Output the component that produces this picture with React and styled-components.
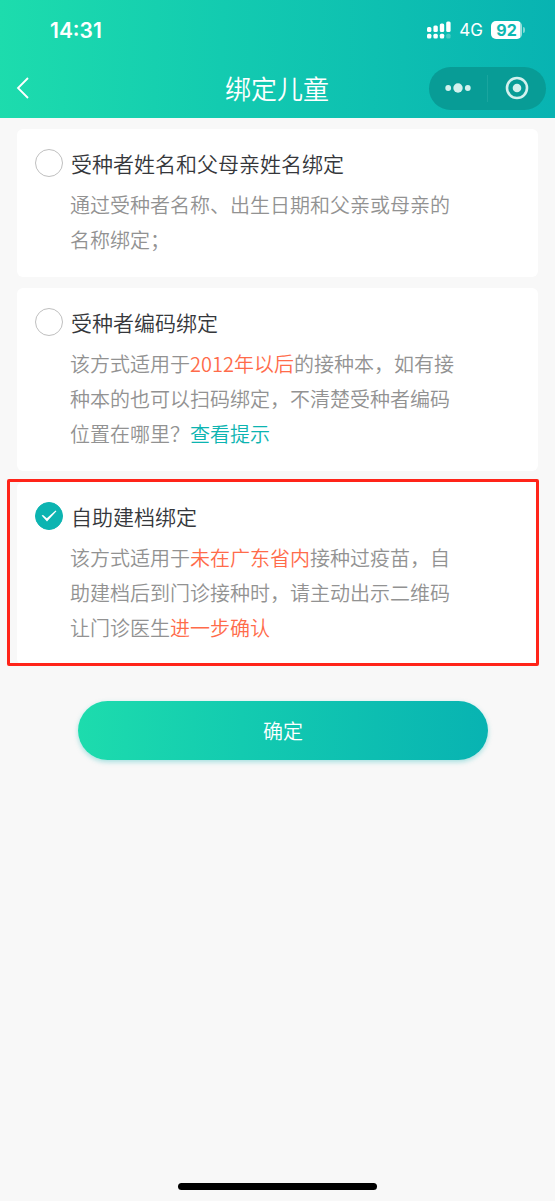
import { useState } from "react";
import styled, { createGlobalStyle, css } from "styled-components";

const GlobalStyle = createGlobalStyle`
  * {
    box-sizing: border-box;
  }

  body {
    margin: 0;
    background: #f8f8f8;
    font-family: "Noto Sans CJK SC", sans-serif;
    font-weight: 350;
  }
`;

const gradient = "linear-gradient(92deg, #1ddcad 0%, #13cbb0 40%, #08b3b2 100%)";

const Page = styled.div`
  min-height: 100vh;
  display: flex;
  flex-direction: column;
`;

const Header = styled.header`
  padding-bottom: 2px;
  background: ${gradient};
  color: #fff;
`;

const StatusBar = styled.div`
  display: flex;
  align-items: center;
  justify-content: space-between;
  height: 60px;
  padding: 0 30px 0 50px;
  font-family: Inter, sans-serif;
`;

const Time = styled.span`
  font-size: 21px;
  font-weight: 600;
`;

const StatusIcons = styled.div`
  display: flex;
  align-items: center;
  gap: 8px;
`;

const Network = styled.span`
  font-size: 17px;
  font-weight: 400;
`;

const Battery = styled.div`
  display: flex;
  align-items: center;
  gap: 1px;
`;

const BatteryLevel = styled.span`
  width: 31px;
  height: 18px;
  border-radius: 5px;
  background: linear-gradient(90deg, #fff 92%, #9be0dc 92%);
  color: #0cb8b1;
  font-size: 16px;
  font-weight: 700;
  line-height: 18px;
  text-align: center;
`;

const BatteryTip = styled.span`
  width: 2px;
  height: 6px;
  border-radius: 0 2px 2px 0;
  background: #7fd8d4;
`;

const NavBar = styled.div`
  display: grid;
  grid-template-columns: 1fr auto 1fr;
  align-items: center;
  height: 56px;
  padding: 0 9px 0 8px;
`;

const BackButton = styled.button`
  display: flex;
  justify-self: start;
  padding: 0;
  border: none;
  background: none;
  color: #fff;
`;

const NavTitle = styled.h1`
  margin: 0;
  font-size: 26px;
  font-weight: 350;
  line-height: 36px;
`;

const Capsule = styled.div`
  display: flex;
  align-items: center;
  justify-self: end;
  width: 117px;
  height: 43px;
  border-radius: 22px;
  background: #089c96;
`;

const CapsuleButton = styled.button`
  flex: 1;
  display: flex;
  align-items: center;
  justify-content: center;
  height: 27px;
  padding: 0;
  border: none;
  background: none;

  & + & {
    border-left: 1px solid #1aa59f;
  }
`;

const Form = styled.form`
  display: flex;
  flex-direction: column;
  gap: 11px;
  padding: 11px 17px 0;
`;

const Card = styled.section`
  position: relative;
  padding: 17px 18px 20px;
  border-radius: 6px;
  background: #fff;

  ${(props) =>
    props.$marked &&
    css`
      &::after {
        content: "";
        position: absolute;
        inset: -3px -1px -1px -10px;
        border: 3px solid #ff2419;
        border-radius: 2px;
        pointer-events: none;
      }
    `}
`;

const OptionLabel = styled.label`
  display: flex;
  align-items: center;
  gap: 8px;
  color: #35373b;
  font-size: 21px;
  line-height: 34px;
`;

const RadioBox = styled.span`
  display: grid;
  place-items: center;

  & > * {
    grid-area: 1 / 1;
  }

  svg {
    pointer-events: none;
  }
`;

const Radio = styled.input`
  appearance: none;
  width: 28px;
  height: 28px;
  margin: 0;
  border: 1px solid #bfbfbf;
  border-radius: 50%;
  background: #fff;

  &:checked {
    border-color: #0cb4b1;
    background: #0cb4b1;
  }
`;

const Description = styled.p`
  margin: 7px 59px 0 35px;
  color: #929292;
  font-size: 20px;
  line-height: 35px;
`;

const Highlight = styled.span`
  color: #ff6b4a;
`;

const HintLink = styled.a`
  color: #0cb4b1;
  text-decoration: none;
`;

const SubmitButton = styled.button`
  height: 59px;
  margin: 25px 50px 0 61px;
  border: none;
  border-radius: 30px;
  background: ${gradient};
  box-shadow: 0 2px 5px rgba(8, 179, 178, 0.35);
  color: #fff;
  font-family: inherit;
  font-size: 20px;
  font-weight: 350;
`;

const HomeIndicator = styled.div`
  width: 36%;
  height: 7px;
  margin: auto auto 11px;
  border-radius: 4px;
  background: #000;
`;

const SignalIcon = () => (
  <svg width="24" height="18" viewBox="0 0 24 18" fill="#fff">
    <rect x="0" y="6" width="4.4" height="5" rx="1.5" />
    <rect x="6.4" y="4.5" width="4.4" height="6.5" rx="1.5" />
    <rect x="12.8" y="2.5" width="4.4" height="8.5" rx="1.5" />
    <rect x="19.2" y="0.5" width="4.4" height="10.5" rx="1.5" />
    <rect x="0" y="12.8" width="4.4" height="4.8" rx="1.5" />
    <rect x="6.4" y="12.8" width="4.4" height="4.8" rx="1.5" />
    <rect x="12.8" y="12.8" width="4.4" height="4.8" rx="1.5" />
    <rect x="19.2" y="12.8" width="4.4" height="4.8" rx="1.5" opacity="0.25" />
  </svg>
);

const BackIcon = () => (
  <svg width="22" height="24" viewBox="0 0 22 24" fill="none">
    <path d="M20 2 L10 12 L20 22" stroke="currentColor" strokeWidth="1.8" />
  </svg>
);

const MoreIcon = () => (
  <svg width="26" height="10" viewBox="0 0 26 10" fill="#d3f1ee">
    <circle cx="3.2" cy="5" r="2.9" />
    <circle cx="13" cy="5" r="4.7" />
    <circle cx="22.8" cy="5" r="2.9" />
  </svg>
);

const CloseIcon = () => (
  <svg width="24" height="24" viewBox="0 0 24 24">
    <circle cx="12" cy="12" r="10" fill="none" stroke="#d3f1ee" strokeWidth="2.6" />
    <circle cx="12" cy="12" r="4.3" fill="#d3f1ee" />
  </svg>
);

const CheckIcon = () => (
  <svg width="16" height="14" viewBox="0 0 16 14" fill="none">
    <path d="M0.6 6.6 L2 6 L5.8 9.2 L14.6 1.4 L15.4 2.2 L6 12.6 Z" fill="#fff" />
  </svg>
);

const options = [
  {
    id: "name",
    title: "受种者姓名和父母亲姓名绑定",
    description: "通过受种者名称、出生日期和父亲或母亲的名称绑定；",
  },
  {
    id: "code",
    title: "受种者编码绑定",
    description: (
      <>
        该方式适用于<Highlight>2012年以后</Highlight>
        的接种本，如有接种本的也可以扫码绑定，不清楚受种者编码位置在哪里？
        <HintLink href="#hint">查看提示</HintLink>
      </>
    ),
  },
  {
    id: "self",
    title: "自助建档绑定",
    marked: true,
    description: (
      <>
        该方式适用于<Highlight>未在广东省内</Highlight>
        接种过疫苗，自助建档后到门诊接种时，请主动出示二维码让门诊医生
        <Highlight>进一步确认</Highlight>
      </>
    ),
  },
];

const App = () => {
  const [selected, setSelected] = useState("self");

  return (
    <Page lang="zh-CN">
      <GlobalStyle />
      <Header>
        <StatusBar>
          <Time>14:31</Time>
          <StatusIcons>
            <SignalIcon />
            <Network>4G</Network>
            <Battery>
              <BatteryLevel>92</BatteryLevel>
              <BatteryTip />
            </Battery>
          </StatusIcons>
        </StatusBar>
        <NavBar>
          <BackButton type="button" aria-label="返回">
            <BackIcon />
          </BackButton>
          <NavTitle>绑定儿童</NavTitle>
          <Capsule>
            <CapsuleButton type="button" aria-label="更多">
              <MoreIcon />
            </CapsuleButton>
            <CapsuleButton type="button" aria-label="关闭">
              <CloseIcon />
            </CapsuleButton>
          </Capsule>
        </NavBar>
      </Header>

      <Form onSubmit={(e) => e.preventDefault()}>
        {options.map((option) => (
          <Card key={option.id} $marked={option.marked}>
            <OptionLabel>
              <RadioBox>
                <Radio
                  type="radio"
                  name="bind"
                  value={option.id}
                  checked={selected === option.id}
                  onChange={() => setSelected(option.id)}
                />
                {selected === option.id && <CheckIcon />}
              </RadioBox>
              {option.title}
            </OptionLabel>
            <Description>{option.description}</Description>
          </Card>
        ))}
        <SubmitButton type="submit">确定</SubmitButton>
      </Form>

      <HomeIndicator />
    </Page>
  );
};

export default App;
